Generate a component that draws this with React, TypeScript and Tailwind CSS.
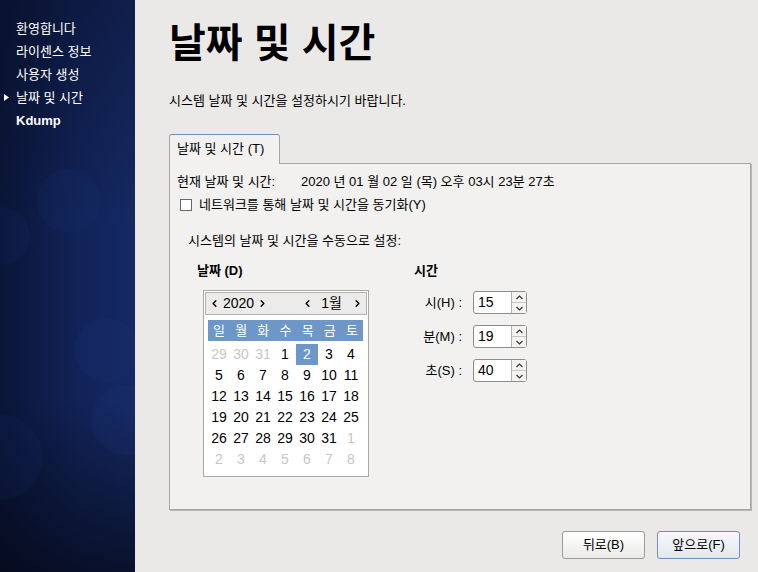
import { ChevronLeft, ChevronRight } from "lucide-react";

const FONT = "font-['Liberation_Sans','Noto_Sans_CJK_KR',sans-serif]";

const STEPS = ["환영합니다", "라이센스 정보", "사용자 생성", "날짜 및 시간", "Kdump"];
const WEEKDAYS = ["일", "월", "화", "수", "목", "금", "토"];

// 6 weeks, starting sunday 29 dec 2019
const DAYS: { n: number; muted: boolean }[] = [
  ...[29, 30, 31].map((n) => ({ n, muted: true })),
  ...Array.from({ length: 31 }, (_, i) => ({ n: i + 1, muted: false })),
  ...Array.from({ length: 8 }, (_, i) => ({ n: i + 1, muted: true })),
];

function Sidebar() {
  return (
    <aside className="relative w-[135px] shrink-0 overflow-hidden bg-[linear-gradient(180deg,rgba(5,9,25,0.35)_0%,rgba(5,9,25,0)_40%,rgba(5,9,25,0)_70%,rgba(4,7,20,0.7)_100%),linear-gradient(90deg,#0a1538_0%,#112358_60%,#152a64_100%)]">
      {/* bokeh circles */}
      <div className="absolute left-[37px] top-[169px] h-[64px] w-[64px] rounded-full bg-[#1b3070]/20" />
      <div className="absolute left-[-28px] top-[207px] h-[58px] w-[58px] rounded-full bg-[#1b3070]/15" />
      <div className="absolute left-[74px] top-[318px] h-[64px] w-[64px] rounded-full bg-[#1d3476]/20" />
      <div className="absolute left-[91px] top-[385px] h-[70px] w-[70px] rounded-full bg-[#1d3476]/20" />
      <div className="absolute left-[-43px] top-[414px] h-[86px] w-[86px] rounded-full bg-[#1b3070]/15" />

      <ul className="relative pt-[17px] text-[13px] leading-[23px] text-white">
        {STEPS.map((s, i) => (
          <li key={s} className="relative pl-[16px]">
            {i === 3 && (
              <svg className="absolute left-[4px] top-[8px]" width="5" height="7" viewBox="0 0 5 7">
                <path d="M0 0 L5 3.5 L0 7 Z" fill="#ffffff" />
              </svg>
            )}
            <span className={i === 4 ? "font-bold" : ""}>{s}</span>
          </li>
        ))}
      </ul>
    </aside>
  );
}

function Calendar() {
  return (
    <div className="ml-[6px] mt-[10px] h-[187px] w-[166px] border border-[#a9a9a9] bg-white p-[1px]">
      <div className="flex h-[23px] items-center justify-between border border-[#b4b2b0] bg-[#ecebe9] px-[3px] text-[14px] text-black">
        <div className="flex items-center">
          <ChevronLeft className="h-[11px] w-[11px]" strokeWidth={3} />
          <span className="mx-[3px]">2020</span>
          <ChevronRight className="h-[11px] w-[11px]" strokeWidth={3} />
        </div>
        <div className="flex items-center">
          <ChevronLeft className="h-[11px] w-[11px]" strokeWidth={3} />
          <span className="ml-[8px] mr-[10px]">1월</span>
          <ChevronRight className="h-[11px] w-[11px]" strokeWidth={3} />
        </div>
      </div>
      <div className="ml-[3px] mt-[5px] grid h-[21px] w-[155px] grid-cols-7 items-center bg-[#6e97c9] text-center text-[13px] text-white">
        {WEEKDAYS.map((w) => (
          <span key={w}>{w}</span>
        ))}
      </div>
      <div className="ml-[3px] mt-[3px] grid w-[154px] grid-cols-7 text-center text-[14px] leading-[21px]">
        {DAYS.map((d, i) => (
          <span
            key={i}
            className={
              !d.muted && d.n === 2
                ? "bg-[#6e97c9] text-white"
                : d.muted
                ? "text-[#c9c6c3]"
                : "text-black"
            }
          >
            {d.n}
          </span>
        ))}
      </div>
    </div>
  );
}

function SpinBox({ value }: { value: string }) {
  return (
    <div className="flex h-[23px] w-[54px] rounded-[3px] border border-[#8e8c8a] bg-white">
      <span className="flex-1 pl-[4px] text-[14px] leading-[21px] text-black">{value}</span>
      <div className="flex w-[15px] flex-col border-l border-[#b4b2b0] bg-[#f4f3f2]">
        <div className="flex flex-1 items-center justify-center border-b border-[#c8c6c4]">
          <svg width="7" height="5" viewBox="0 0 7 5">
            <path d="M0.5 4 L3.5 1 L6.5 4" stroke="#333" strokeWidth="1.2" fill="none" />
          </svg>
        </div>
        <div className="flex flex-1 items-center justify-center">
          <svg width="7" height="5" viewBox="0 0 7 5">
            <path d="M0.5 1 L3.5 4 L6.5 1" stroke="#333" strokeWidth="1.2" fill="none" />
          </svg>
        </div>
      </div>
    </div>
  );
}

export default function App() {
  return (
    <div className={`flex h-[572px] w-[758px] overflow-hidden bg-[#ebe9e7] ${FONT}`}>
      <Sidebar />

      <main className="flex flex-1 flex-col pl-[34px] pr-[8px]">
        <h1 className="mt-[20px] text-[40px] font-bold leading-[46px] text-black">날짜 및 시간</h1>
        <p className="mt-[26px] text-[13px] leading-[18px] text-black">시스템 날짜 및 시간을 설정하시기 바랍니다.</p>

        {/* tab */}
        <div className="mt-[24px] flex">
          <div className="relative z-10 -mb-px h-[30px] w-[111px] rounded-t-[3px] border border-b-0 border-[#a6a4a2] border-t-[#6e8fb8] bg-[#f2f1ef] pl-[7px] text-[13px] leading-[28px] text-black">
            날짜 및 시간 (T)
          </div>
        </div>
        <section className="h-[347px] w-[582px] border border-[#a6a4a2] bg-[#f2f1ef] text-[13px] text-black shadow-[1px_1px_0_#b9b7b5]">
          <div className="flex pl-[7px] pt-[9px] leading-[18px]">
            <span className="w-[124px]">현재 날짜 및 시간:</span>
            <span>2020 년 01 월 02 일 (목) 오후 03시 23분 27초</span>
          </div>
          <label className="mt-[5px] flex items-center pl-[10px] leading-[18px]">
            <span className="mr-[7px] h-[12px] w-[12px] border border-[#6a6866] bg-white" />
            네트워크를 통해 날짜 및 시간을 동기화(Y)
          </label>
          <p className="mt-[18px] pl-[18px] leading-[18px]">시스템의 날짜 및 시간을 수동으로 설정:</p>

          <div className="mt-[12px] flex pl-[27px]">
            <div className="w-[217px]">
              <p className="font-bold leading-[18px]">날짜 (D)</p>
              <Calendar />
            </div>
            <div>
              <p className="font-bold leading-[18px]">시간</p>
              <div className="mt-[11px] flex flex-col gap-[11px]">
                {[
                  ["시(H) :", "15"],
                  ["분(M) :", "19"],
                  ["초(S) :", "40"],
                ].map(([l, v]) => (
                  <div key={l} className="flex items-center">
                    <span className="w-[48px] text-right text-[13px]">{l}</span>
                    <span className="w-[11px]" />
                    <SpinBox value={v} />
                  </div>
                ))}
              </div>
            </div>
          </div>
        </section>

        <div className="mt-[21px] flex justify-end gap-[12px] pr-[11px]">
          <button className="h-[28px] w-[83px] rounded-[3px] border border-[#9c9a98] bg-[linear-gradient(180deg,#ffffff,#ebeae9)] text-[13px] text-black">
            뒤로(B)
          </button>
          <button className="h-[28px] w-[83px] rounded-[3px] border border-[#6f8fbd] bg-[linear-gradient(180deg,#f6f8fb,#e3e7ee)] text-[13px] text-black">
            앞으로(F)
          </button>
        </div>
      </main>
    </div>
  );
}
